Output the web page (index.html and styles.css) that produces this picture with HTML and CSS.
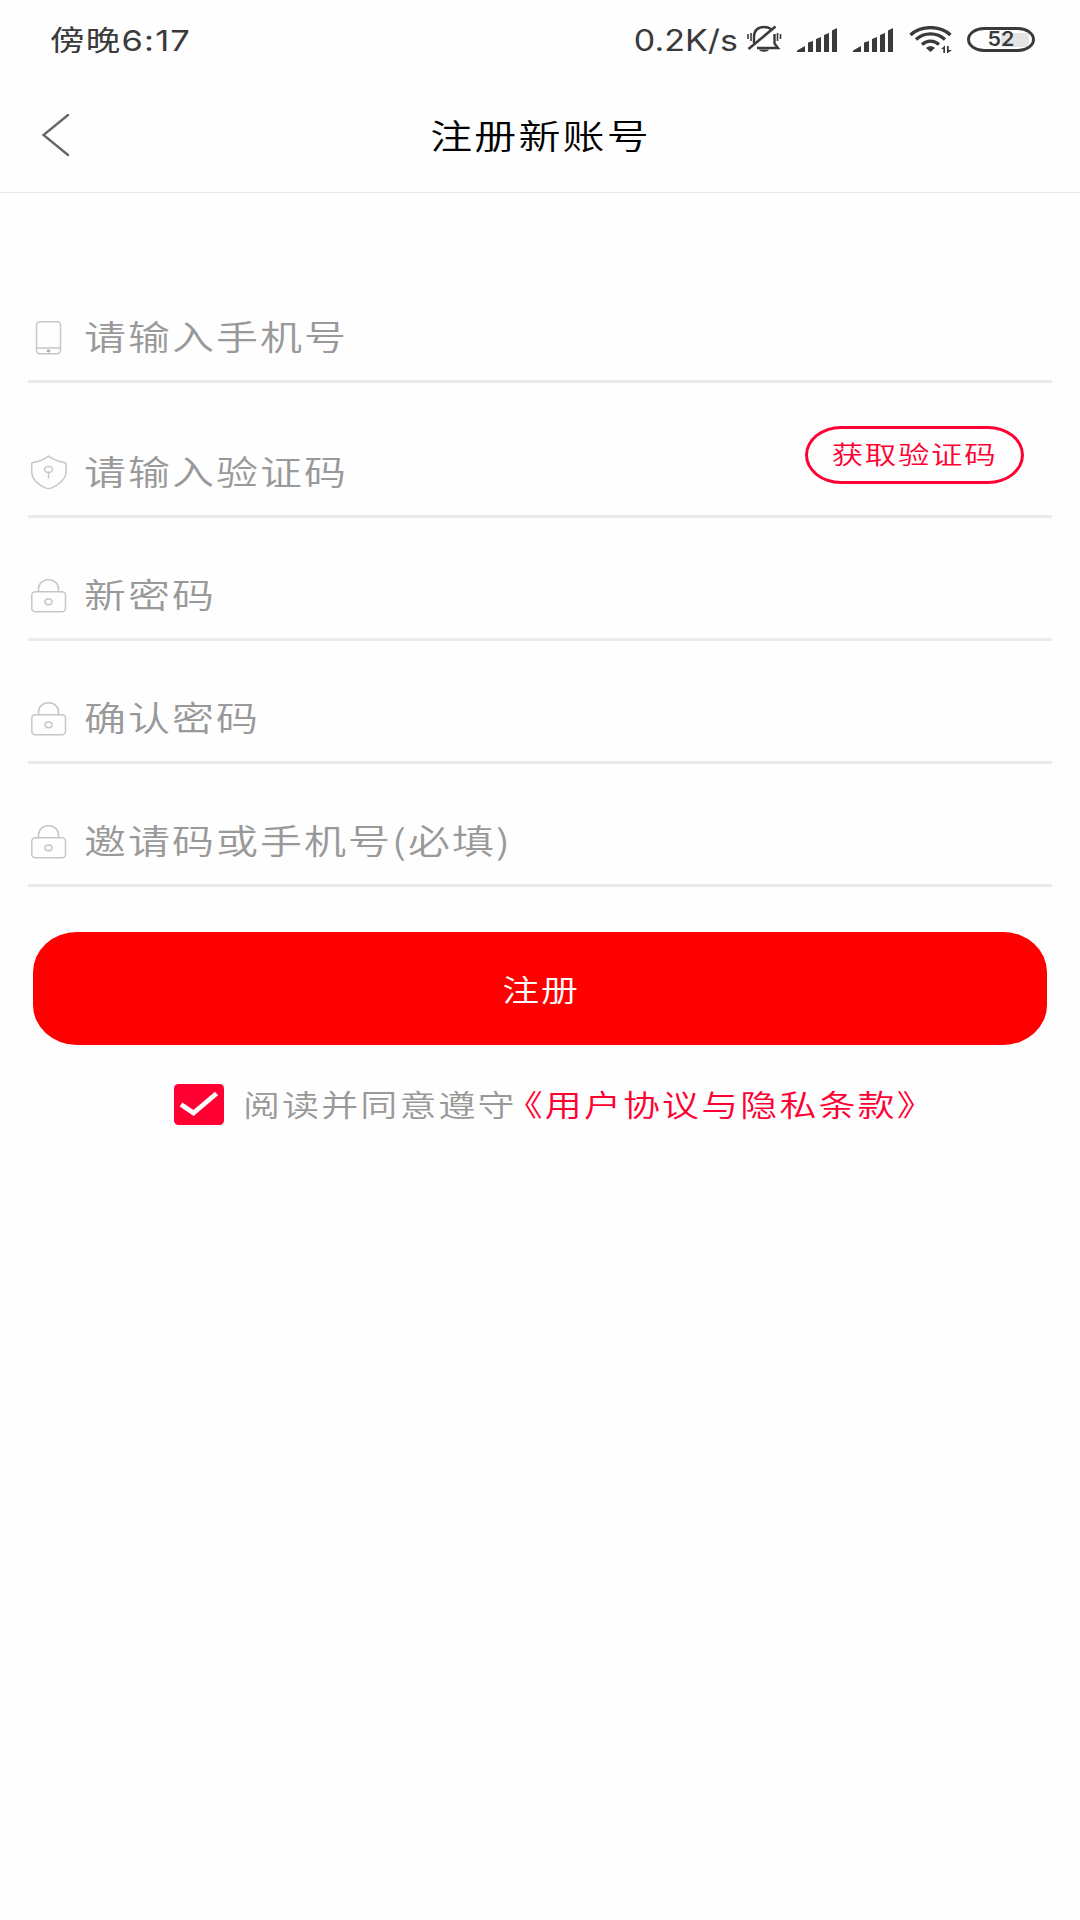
FILE: index.html
```html
<!DOCTYPE html>
<html lang="zh-CN">
<head>
<meta charset="utf-8">
<title>注册新账号</title>
<link rel="stylesheet" href="styles.css">
</head>
<body>
<div class="status">
  <span class="txt status-time">傍晚6:17</span>
  <div class="status-right">
    <span class="txt status-net">0.2K/s</span>
    <svg class="bell" width="36" height="28" viewBox="0 0 36 28" fill="none" stroke="#3a3a3a" stroke-width="2">
      <path d="M8 18V11.500C8 5.500 12 2 18 2c3 0 5 .6 7 2M28.500 9v9.500l3.500 4.500H11" stroke-width="2.400"/>
      <path d="M2.500 24L29.500 1.500" stroke-width="2.600"/>
      <path d="M2 9v5M5 8v8M31.500 8v8M34.500 9v5" stroke-width="1.600"/>
      <path d="M13 24.500h10c-1 3-9 3-10 0z" fill="#3a3a3a" stroke="none"/>
    </svg>
    <svg class="signal" width="41" height="24" viewBox="0 0 41 24" fill="#3a3a3a"><path d="M0 24v-1.500L8 18v6zM11 24V14.500l5-1.500v11zM19 24V11l5-2v15zM27 24V7l5-2v19zM35 24V2.500L40 0v24z"/></svg>
    <svg class="signal" width="41" height="24" viewBox="0 0 41 24" fill="#3a3a3a"><path d="M0 24v-1.500L8 18v6zM11 24V14.500l5-1.500v11zM19 24V11l5-2v15zM27 24V7l5-2v19zM35 24V2.500L40 0v24z"/></svg>
    <svg class="wifi" width="44" height="28" viewBox="0 0 44 28" fill="none" stroke="#3a3a3a" stroke-width="3.400">
      <path d="M1.500 9C12-.8 31-.8 41.500 9M7 13.500c8-7.500 21-7.500 29 0M13 18.500c5-4.500 12-4.500 17 0"/>
      <path d="M17 22c2-2.500 7-2.500 9 0l-4.500 4z" fill="#3a3a3a" stroke="none"/>
      <path d="M32 23l4-3.500V27h-1.700v-4zM38 20h1.700v4H43l-5 3.500z" fill="#3a3a3a" stroke="none"/>
    </svg>
    <div class="battery"><span class="txt">52</span></div>
  </div>
</div>
<header class="header">
  <svg class="back" width="30" height="44" viewBox="0 0 30 44" fill="none" stroke="#666" stroke-width="2.300" stroke-linecap="round"><path d="M27 1L2.500 21L27 41"/></svg>
  <h1 class="txt title">注册新账号</h1>
</header>
<main class="form">
  <div class="field">
    <svg class="icon" width="36" height="36" viewBox="0 0 36 36" fill="none" stroke="#c6c6c6" stroke-width="1.500"><rect x="5.500" y="1.800" width="24" height="32" rx="3.500"/><path d="M5.500 28h24"/><ellipse cx="17.500" cy="31" rx="2" ry="1.400" fill="#b0b0b0" stroke="none"/></svg>
    <span class="txt hint">请输入手机号</span>
  </div>
  <div class="field field-code">
    <svg class="icon" width="36" height="36" viewBox="0 0 36 36" fill="none" stroke="#c6c6c6" stroke-width="1.500"><path d="M17.500 1.200C22 4.400 28 6.900 33.500 7.400c1.200 0 1.500.5 1.500 1.500V16.500c0 8-8 14-15 16.600q-2.500.8-5 0C8 30.500 .7 24.500 .7 16.500V9C.7 8 1 7.500 2 7.500c5.500-.5 11-3 15.500-6.300z"/><ellipse cx="17.500" cy="14.500" rx="4" ry="3"/><path d="M17.500 16.500v7"/></svg>
    <span class="txt hint">请输入验证码</span>
    <button class="code-btn"><span class="txt">获取验证码</span></button>
  </div>
  <div class="field">
    <svg class="icon" width="36" height="36" viewBox="0 0 36 36" fill="none" stroke="#c6c6c6" stroke-width="1.500"><rect x=".8" y="13.800" width="33.700" height="20" rx="3.500"/><path d="M7.500 13.800v-3c0-12 20-12 20 0v3"/><ellipse cx="17.500" cy="23.800" rx="3.600" ry="2.900"/></svg>
    <span class="txt hint">新密码</span>
  </div>
  <div class="field">
    <svg class="icon" width="36" height="36" viewBox="0 0 36 36" fill="none" stroke="#c6c6c6" stroke-width="1.500"><rect x=".8" y="13.800" width="33.700" height="20" rx="3.500"/><path d="M7.500 13.800v-3c0-12 20-12 20 0v3"/><ellipse cx="17.500" cy="23.800" rx="3.600" ry="2.900"/></svg>
    <span class="txt hint">确认密码</span>
  </div>
  <div class="field">
    <svg class="icon" width="36" height="36" viewBox="0 0 36 36" fill="none" stroke="#c6c6c6" stroke-width="1.500"><rect x=".8" y="13.800" width="33.700" height="20" rx="3.500"/><path d="M7.500 13.800v-3c0-12 20-12 20 0v3"/><ellipse cx="17.500" cy="23.800" rx="3.600" ry="2.900"/></svg>
    <span class="txt hint">邀请码或手机号(必填)</span>
  </div>
</main>
<button class="submit"><span class="txt">注册</span></button>
<div class="agree">
  <svg width="50" height="41" viewBox="0 0 50 41"><rect width="50" height="41" rx="4.500" fill="#ff0033"/><path d="M7 20.500L19.500 29L42.500 9.500" fill="none" stroke="#fff" stroke-width="4.800"/></svg>
  <span class="txt agree-text">阅读并同意遵守<a class="terms">《用户协议与隐私条款》</a></span>
</div>
</body>
</html>
```
FILE: styles.css
```css
* { box-sizing: border-box; }
body {
  margin: 0;
  width: 1080px;
  height: 1920px;
  background: #fefefe;
  font-family: "Noto Sans CJK SC", sans-serif;
  font-weight: 350;
  overflow: hidden;
}
.txt {
  display: inline-block;
  transform: scaleY(.8);
  white-space: nowrap;
  line-height: 1;
}
button { border: 0; padding: 0; background: none; font: inherit; }
.status {
  height: 80px;
  padding: 0 45px 0 50px;
  display: flex;
  align-items: center;
  justify-content: space-between;
  color: #3a3a3a;
  font-family: Inter, "Noto Sans CJK SC", sans-serif;
  font-weight: 400;
}
.status-time { padding-top: 2px; font-size: 34.500px; letter-spacing: 1.200px; transform: scaleY(.84); }
.status-right { display: flex; align-items: center; }
.status-net { padding-top: 2px; font-size: 34px; margin-right: 8px; transform: scaleY(.86); }
.bell { margin-right: 15px; margin-bottom: 2px; }
.signal { margin-right: 15px; margin-bottom: 1px; }
.wifi { margin-right: 14px; }
.battery {
  width: 68px;
  height: 25px;
  margin-bottom: 1px;
  border: 3px solid #3a3a3a;
  border-radius: 17px / 12.5px;
  background: linear-gradient(#e4e4e4, #e4e4e4) 31px 3px / 28px 14px no-repeat;
  display: flex;
  align-items: center;
  justify-content: center;
  font-size: 21.500px;
  font-weight: 600;
}
.battery .txt { transform: scaleY(.92); }
.header {
  height: 113px;
  padding: 0 41px;
  border-bottom: 1px solid #e6e6e6;
  display: grid;
  grid-template-columns: 30px 1fr 30px;
  align-items: center;
}
.title {
  margin: 0 0 3px;
  padding-left: 1px;
  font-size: 42px;
  font-weight: 350;
  letter-spacing: 2.100px;
  text-align: center;
  color: #000;
}
.form { padding: 67px 28px 0; }
.field {
  height: 123px;
  padding: 35px 28px 0 3px;
  border-bottom: 3px solid #ebebeb;
  display: flex;
  align-items: center;
  gap: 17px;
}
.field-code { height: 135px; padding-top: 47px; }
.hint { margin: 0 0 3px; font-size: 42px; letter-spacing: 2px; color: #999; }
.code-btn {
  width: 219px;
  height: 58px;
  margin: 0 0 35px auto;
  border: 3px solid #ff0033;
  border-radius: 36px / 29px;
  color: #ff0033;
  font-size: 31.500px;
  letter-spacing: 1.600px;
}
.code-btn .txt { position: relative; top: -2px; }
.submit {
  display: block;
  width: 1014px;
  height: 113px;
  margin: 45px 33px 0;
  border-radius: 44px / 40px;
  background: #ff0000;
  color: #fff;
  font-size: 37px;
  letter-spacing: 1.700px;
}
.submit .txt { position: relative; top: -1px; left: 1px; }
.agree {
  margin: 39px 0 0 174px;
  display: flex;
  align-items: center;
  gap: 19px;
}
.agree-text { margin-bottom: 2px; font-size: 37px; letter-spacing: 2.100px; color: #999; }
.terms { margin-left: -11px; color: #ff0033; }
```
